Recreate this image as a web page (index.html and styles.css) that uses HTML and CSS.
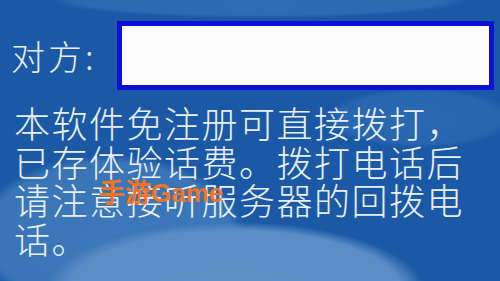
FILE: index.html
```html
<!DOCTYPE html>
<html lang="zh-CN">
<head>
<meta charset="utf-8">
<link rel="stylesheet" href="styles.css">
</head>
<body>
<div class="screen">
  <div class="row">
    <span class="label">对方:</span>
    <div class="input"></div>
  </div>
  <p class="msg">本软件免注册可直接拨打，<br>已存体验话费。拨打电话后<br>请注意接听服务器的回拨电<br>话。</p>
  <span class="mark">手游Game</span>
</div>
</body>
</html>
```

FILE: styles.css
```css
html, body {
  margin: 0;
  padding: 0;
}
.screen {
  position: relative;
  width: 500px;
  height: 281px;
  overflow: hidden;
  font-family: "Noto Sans CJK SC", "Noto Sans", sans-serif;
  font-weight: 300;
  color: #e8f0fb;
  background-color: #1b59a6;
  background-image:
    radial-gradient(ellipse 190px 70px at 235px 292px, #6091c7 0%, #5b8dc5 88%, rgba(90,140,196,0) 100%),
    radial-gradient(ellipse 135px 80px at 110px 235px, #3d78ba 0%, #3a75b8 90%, rgba(58,117,184,0) 100%),
    radial-gradient(ellipse 95px 30px at 420px 118px, #2a69b1 0%, #2866b0 85%, rgba(40,102,176,0) 100%),
    radial-gradient(ellipse 210px 18px at 260px 0px, #2f6db4 0%, #2c6ab2 85%, rgba(44,106,178,0) 100%);
}
.row {
  display: flex;
  align-items: center;
  padding: 21px 0 0 11px;
}
.label {
  width: 106px;
  font-size: 34px;
  line-height: 69px;
  letter-spacing: 3px;
}
.input {
  box-sizing: border-box;
  width: 377px;
  height: 69px;
  background: #fdfdfd;
  border: 5px solid #0b12d6;
}
.msg {
  margin: 13px 0 0 14px;
  font-size: 36px;
  line-height: 38.5px;
  letter-spacing: 1.5px;
  white-space: nowrap;
}
.mark {
  position: absolute;
  left: 99px;
  top: 178px;
  font-family: "Liberation Sans", "Noto Sans CJK SC", sans-serif;
  font-weight: 700;
  font-size: 26px;
  line-height: 30px;
  color: #f27422;
  letter-spacing: 0;
}
```
